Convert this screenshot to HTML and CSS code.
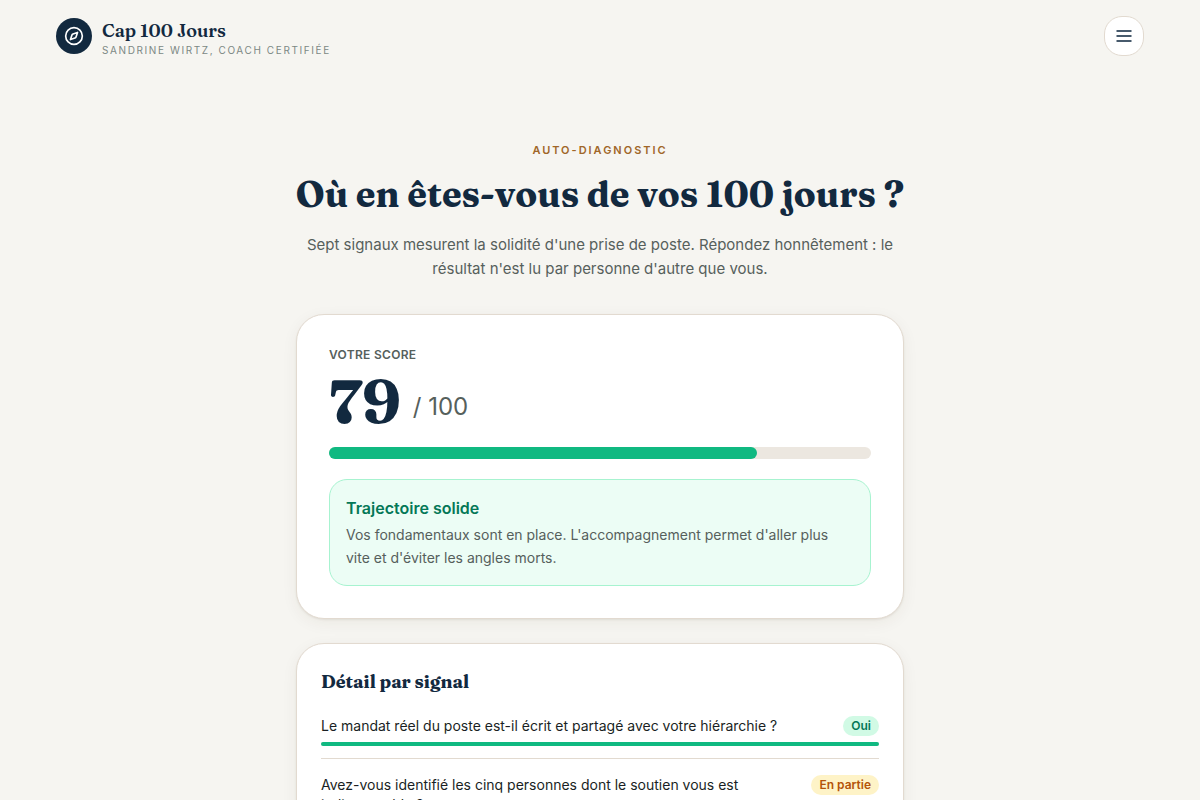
FILE: index.html
```html
<!DOCTYPE html>
<html lang="fr">

<head>
  <meta charset="UTF-8">
  <meta name="viewport" content="width=device-width, initial-scale=1.0">
  <title>Cap 100 Jours</title>
  <link rel="stylesheet" href="styles.css">
</head>

<body>
  <header class="header">
    <a href="#" class="brand">
      <span class="brand-logo">
        <svg width="20" height="20" viewBox="0 0 24 24" fill="none" stroke="currentColor" stroke-width="2" stroke-linecap="round" stroke-linejoin="round" aria-hidden="true">
          <circle cx="12" cy="12" r="10"/>
          <path d="m16.24 7.76-1.804 5.411a2 2 0 0 1-1.265 1.265L7.76 16.24l1.804-5.411a2 2 0 0 1 1.265-1.265z"/>
        </svg>
      </span>
      <span class="brand-text">
        <span class="brand-name">Cap 100 Jours</span>
        <span class="brand-tagline">Sandrine Wirtz, coach certifiée</span>
      </span>
    </a>
    <button type="button" class="menu-btn" aria-label="Menu">
      <svg width="20" height="20" viewBox="0 0 20 20" fill="none" stroke="currentColor" stroke-width="2" aria-hidden="true">
        <path d="M2.5 5h15M2.5 10h15M2.5 15h15"/>
      </svg>
    </button>
  </header>

  <main class="container">
    <div class="intro">
      <p class="eyebrow">Auto-diagnostic</p>
      <h1>Où en êtes-vous de vos 100 jours ?</h1>
      <p class="lead">Sept signaux mesurent la solidité d'une prise de poste. Répondez honnêtement : le résultat n'est lu par personne d'autre que vous.</p>
    </div>

    <section class="card score-card">
      <p class="score-label">Votre score</p>
      <p class="score"><span class="score-value">79</span><span class="score-max">/ 100</span></p>
      <div class="progress">
        <div class="progress-bar" style="width: 79%"></div>
      </div>
      <div class="verdict">
        <h2>Trajectoire solide</h2>
        <p>Vos fondamentaux sont en place. L'accompagnement permet d'aller plus vite et d'éviter les angles morts.</p>
      </div>
    </section>

    <section class="card detail-card">
      <h2>Détail par signal</h2>
      <ul class="signals">
        <li class="signal">
          <div class="signal-row">
            <span>Le mandat réel du poste est-il écrit et partagé avec votre hiérarchie ?</span>
            <span class="badge badge-yes">Oui</span>
          </div>
          <div class="signal-track">
            <div class="signal-bar bar-yes" style="width: 100%"></div>
          </div>
        </li>
        <li class="signal">
          <div class="signal-row">
            <span>Avez-vous identifié les cinq personnes dont le soutien vous est indispensable ?</span>
            <span class="badge badge-partial">En partie</span>
          </div>
          <div class="signal-track">
            <div class="signal-bar bar-partial" style="width: 50%"></div>
          </div>
        </li>
      </ul>
    </section>
  </main>
</body>

</html>
```
FILE: styles.css
```css
* {
  box-sizing: border-box;
}

body {
  margin: 0;
  background-color: #f6f5f1;
  color: #1a1f24;
  font-family: Inter, sans-serif;
  font-size: 14px;
  line-height: 20px;
}

h1,
h2,
p,
ul {
  margin: 0;
  padding: 0;
}

/* En-tête */
.header {
  display: flex;
  align-items: center;
  justify-content: space-between;
  padding: 14px 56px;
}

.brand {
  display: flex;
  align-items: center;
  gap: 10px;
  color: #12293f;
  text-decoration: none;
}

.brand-logo {
  display: flex;
  align-items: center;
  justify-content: center;
  width: 36px;
  height: 36px;
  border-radius: 50%;
  background-color: #12293f;
  color: #fff;
}

.brand-text {
  display: flex;
  flex-direction: column;
  padding-top: 6px;
}

.brand-name {
  font-family: Fraunces, "Liberation Serif", serif;
  font-size: 18px;
  font-weight: 600;
  line-height: 22px;
}

.brand-tagline {
  color: #7c8884;
  font-size: 10px;
  line-height: 16px;
  letter-spacing: 0.16em;
  text-transform: uppercase;
}

.menu-btn {
  display: flex;
  align-items: center;
  justify-content: center;
  width: 40px;
  height: 40px;
  padding: 0;
  border: 1px solid #e2dad0;
  border-radius: 18px;
  background-color: #fff;
  color: #475a6c;
  cursor: pointer;
}

/* Contenu */
.container {
  max-width: 672px;
  margin: 0 auto;
  padding: 70px 32px;
}

.intro {
  margin-bottom: 33px;
  text-align: center;
}

.eyebrow {
  color: #a06628;
  font-size: 11px;
  font-weight: 600;
  line-height: 16px;
  letter-spacing: 0.18em;
  text-transform: uppercase;
}

h1 {
  margin: 12px -8px 15px;
  color: #12293f;
  font-family: Fraunces, "Liberation Serif", serif;
  font-size: 36px;
  font-weight: 700;
  line-height: 48px;
}

.lead {
  color: #56605c;
  font-size: 15px;
  line-height: 24px;
}

.card {
  margin-bottom: 24px;
  border: 1px solid #e2dad0;
  border-radius: 28px;
  background-color: #fff;
  box-shadow: 0 1px 2px rgba(60, 45, 25, 0.08), 0 4px 16px rgba(60, 45, 25, 0.06);
}

.score-card {
  padding: 32px;
}

.score-label {
  color: #56605c;
  font-size: 12px;
  font-weight: 600;
  line-height: 16px;
  letter-spacing: 0.025em;
  text-transform: uppercase;
}

.score {
  display: flex;
  align-items: flex-end;
  gap: 12px;
  margin: 8px 0 16px;
}

.score-value {
  color: #12293f;
  font-family: Fraunces, "Liberation Serif", serif;
  font-size: 60px;
  font-weight: 700;
  line-height: 60px;
}

.score-max {
  padding-bottom: 8px;
  color: #56605c;
  font-size: 24px;
  line-height: 32px;
}

.progress {
  height: 12px;
  border-radius: 6px;
  background-color: #ece7e0;
}

.progress-bar {
  height: 12px;
  border-radius: 6px;
  background-color: #10b981;
}

.verdict {
  margin-top: 20px;
  padding: 16px;
  border: 1px solid #a7f3d0;
  border-radius: 18px;
  background-color: #ecfdf5;
}

.verdict h2 {
  margin-bottom: 3px;
  color: #047857;
  font-size: 16px;
  font-weight: 600;
  line-height: 24px;
}

.verdict p {
  color: #56605c;
  line-height: 23px;
}

/* Détail */
.detail-card {
  padding: 24px;
}

.detail-card h2 {
  margin-bottom: 4px;
  color: #12293f;
  font-family: Fraunces, "Liberation Serif", serif;
  font-size: 18px;
  font-weight: 700;
  line-height: 28px;
}

.signals {
  list-style: none;
}

.signal {
  padding: 16px 0 12px;
  border-bottom: 1px solid #e2dad0;
}

.signal:last-child {
  border-bottom: none;
}

.signal-row {
  display: flex;
  align-items: flex-start;
  justify-content: space-between;
  gap: 24px;
  margin-bottom: 6px;
}

.badge {
  padding: 0 8px;
  border-radius: 10px;
  font-size: 12px;
  font-weight: 600;
  white-space: nowrap;
}

.badge-yes {
  background-color: #d1fae5;
  color: #047857;
}

.badge-partial {
  background-color: #fef3c7;
  color: #b45309;
}

.signal-track {
  height: 4px;
  border-radius: 2px;
  background-color: #ece7e0;
}

.signal-bar {
  height: 4px;
  border-radius: 2px;
}

.bar-yes {
  background-color: #10b981;
}

.bar-partial {
  background-color: #f59e0b;
}
```
